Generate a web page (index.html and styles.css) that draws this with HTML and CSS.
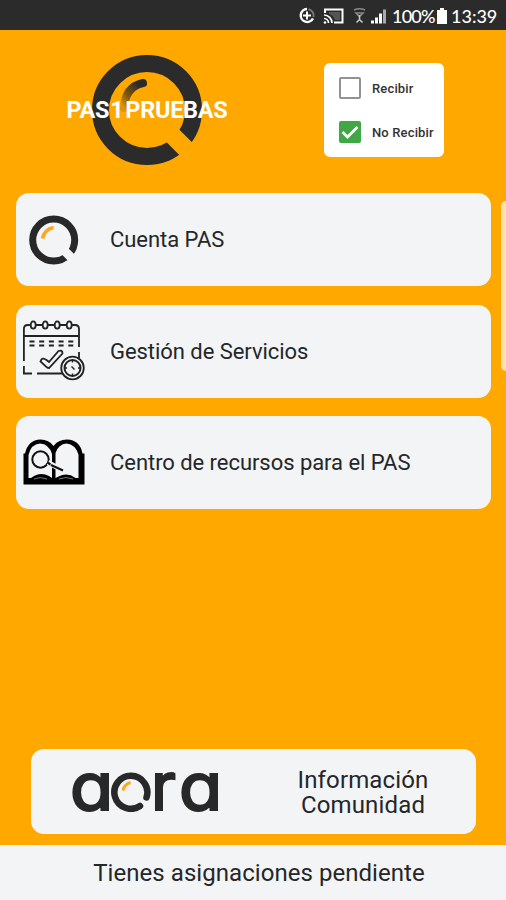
FILE: index.html
```html
<!DOCTYPE html>
<html lang="es">
<head>
    <meta charset="UTF-8">
    <meta name="viewport" content="width=device-width, initial-scale=1.0">
    <title>PAS</title>
    <link rel="stylesheet" href="styles.css">
</head>
<body>

    <div class="status-bar">
        <svg class="status-icons" width="92" height="20" viewBox="0 0 92 20">
            <!-- Data saver -->
            <path d="M9 3A6.500 6.500 0 1 0 15 12.500" fill="none" stroke="#fff" stroke-width="2.400"/>
            <path d="M10.500 3.200A6.500 6.500 0 0 1 15.500 11" fill="none" stroke="#777" stroke-width="2"/>
            <path d="M9 5.500v8M5 9.500h8" stroke="#fff" stroke-width="2"/>
            <!-- Cast -->
            <path d="M27 7V3.500h17.500v13H36" fill="none" stroke="#fff" stroke-width="2"/>
            <path d="M26 9a8 8 0 0 1 8 8M26 12.500a4.500 4.500 0 0 1 4.500 4.500" fill="none" stroke="#fff" stroke-width="1.700"/>
            <path d="M31 6h11v8h-5q-2-5-6-6z" fill="#555"/>
            <circle cx="27" cy="16.500" r="1.300" fill="#fff"/>
            <!-- Wifi -->
            <path d="M56 4q5.500-2.500 11 0M58 7l3.500 3.500L65 7z" fill="none" stroke="#888" stroke-width="1.600"/>
            <path d="M61.500 9v4M58.500 16.500l3-3 3 3" fill="none" stroke="#ccc" stroke-width="1.500"/>
            <!-- Signal -->
            <path d="M73 17.500v-3h3v3zM77 17.500v-6h3v6zM81 17.500v-10h3v10z" fill="#fff"/>
            <path d="M85 17.500V3.500h3v14z" fill="#aaa"/>
        </svg>
        <span class="battery-level">100%</span>
        <svg class="battery" width="10" height="16" viewBox="0 0 10 16">
            <path d="M3 0h4v2h3v14H0V2h3z" fill="#fff"/>
        </svg>
        <span class="clock">13:39</span>
    </div>

    <div class="header">
        <div class="brand">
            <svg width="112" height="112" viewBox="0 0 112 112">
                <defs>
                    <linearGradient id="shine" x1="0" y1="1" x2="0.900" y2="0">
                        <stop offset="0" stop-color="#e09400"/>
                        <stop offset="0.350" stop-color="#80580f"/>
                        <stop offset="0.900" stop-color="#2b2a29"/>
                    </linearGradient>
                </defs>
                <circle cx="56" cy="56" r="46.500" fill="none" stroke="#2b2b2b" stroke-width="17"/>
                <path d="M76 76l34 34" stroke="#ffa800" stroke-width="18"/>
                <path d="M33 54Q34 33 52 29" fill="none" stroke="url(#shine)" stroke-width="8" stroke-linecap="round"/>
            </svg>
            <span class="brand-name">PAS<span class="brand-digit">1</span>PRUEBAS</span>
        </div>
        <div class="options">
            <label class="option"><span class="checkbox"></span>Recibir</label>
            <label class="option">
                <span class="checkbox checked">
                    <svg width="22" height="22" viewBox="0 0 22 22"><path d="M3.500 11l5 5L18.500 6" fill="none" stroke="#fff" stroke-width="2.700"/></svg>
                </span>No Recibir
            </label>
        </div>
    </div>

    <div class="menu">
        <div class="card">
            <svg class="card-icon" width="64" height="64" viewBox="0 0 64 64">
                <circle cx="30.700" cy="32" r="21" fill="none" stroke="#282828" stroke-width="7"/>
                <path d="M39 40.300l17 17" stroke="#f2f4f6" stroke-width="9"/>
                <path d="M19.500 30.500Q21.500 21.500 30.500 19.500" fill="none" stroke="#ffa61a" stroke-width="3.600"/>
            </svg>
            <span class="card-text">Cuenta PAS</span>
        </div>
        <div class="card">
            <svg class="card-icon" width="64" height="64" viewBox="0 0 64 64" fill="none" stroke="#222" stroke-width="1.800">
                <path d="M.9 42V10q0-4 4-4h2M13 6h6M25 6h6M37 6h6M49 6h3q4 0 4 4v18M.9 17H56M56 33v6M.9 47v7.500H9M14 54.500h25"/>
                <ellipse cx="10.200" cy="6" rx="2.500" ry="3.700"/>
                <ellipse cx="22.200" cy="6" rx="2.500" ry="3.700"/>
                <ellipse cx="34.200" cy="6" rx="2.500" ry="3.700"/>
                <ellipse cx="46.200" cy="6" rx="2.500" ry="3.700"/>
                <path d="M6.500 22.500h44M6.500 26.500h44" stroke-dasharray="5 4.700"/>
                <path d="M17.500 42.500q1.500-5 6-1.500l2.500 2L35.500 32q4-1.500 4 2.500L26 49q-2 0-3-1.500z"/>
                <circle cx="49.500" cy="49" r="11.300"/>
                <circle cx="49.500" cy="49" r="8" stroke-width="2"/>
                <path d="M49.500 40.500v3M49.500 54.500v3M41 49h3M55 49h3M48.500 47.500l3 3" stroke-width="1.400"/>
            </svg>
            <span class="card-text">Gestión de Servicios</span>
        </div>
        <div class="card">
            <svg class="card-icon" width="64" height="64" viewBox="0 0 64 64">
                <path d="M.5 22.500H2Q5 9 17.500 8.500 26 8.500 30.500 15 35 8.500 44 8.500 57 9 59.500 22.500H61.500v31H.5z" fill="#000"/>
                <path d="M5.500 47V24Q8 13 17 12.500 26 13 29 23v24l-3-2q-9-5-18 2z" fill="#f2f4f6"/>
                <path d="M32.500 47V22q3-9 11-9.500 9 1 12 11V47h-3q-8-6-17-1.500z" fill="#f2f4f6"/>
                <path d="M11 48q6-3 13 0M36 48q7-3 14 0" fill="none" stroke="#777" stroke-width="1"/>
                <circle cx="17.500" cy="28.500" r="8.200" fill="#f2f4f6" stroke="#111" stroke-width="2"/>
                <path d="M25 31.500l15 8" stroke="#f2f4f6" stroke-width="5"/>
                <path d="M24.500 31.500l3 2M28 34l12 5.500" stroke="#111" stroke-width="2.200"/>
            </svg>
            <span class="card-text">Centro de recursos para el PAS</span>
        </div>
    </div>

    <div class="info-card">
        <div class="logo">
            <span class="logo-letter logo-a">a</span>
            <svg class="logo-ring" width="40" height="40" viewBox="0 0 40 40">
                <path d="M29 34A16.500 16.500 0 1 1 35.500 25.500" fill="none" stroke="#282828" stroke-width="6.500" stroke-linecap="round"/>
                <path d="M12 18.500Q13.500 12 19.500 10.500" fill="none" stroke="#ffa61a" stroke-width="3"/>
            </svg>
            <span class="logo-letter logo-r">r</span>
            <span class="logo-letter logo-a">a</span>
        </div>
        <div class="info-text">
            <span>Información</span>
            <span>Comunidad</span>
        </div>
    </div>

    <div class="footer">Tienes asignaciones pendiente</div>

    <div class="edge-handle"></div>

</body>
</html>
```
FILE: styles.css
```css
body {
    display: flex;
    flex-direction: column;
    height: 900px;
    margin: 0;
    overflow: hidden;
    background-color: #ffa800;
    color: #252628;
    font-family: Roboto, sans-serif;
}

.status-bar {
    display: flex;
    justify-content: flex-end;
    align-items: center;
    height: 30px;
    padding: 1px 9px 0 0;
    box-sizing: border-box;
    background-color: #2b2b2b;
    color: #fff;
    font-family: Lato, sans-serif;
    font-size: 18px;
    font-weight: 500;
}

.status-icons {
    margin-right: 2px;
}

.battery-level {
    width: 42px;
    letter-spacing: -0.8px;
}

.battery {
    margin: 0 4px 0 3px;
}

.clock {
    width: 46px;
}

.header {
    display: flex;
    justify-content: space-between;
    height: 163px;
    padding: 24px 62px 0 66px;
    box-sizing: border-box;
}

.brand {
    display: grid;
    width: 162px;
    height: 112px;
    place-items: center;
}

.brand > * {
    grid-area: 1 / 1;
}

.brand-name {
    color: #fff;
    font-size: 23.5px;
    font-weight: 700;
    white-space: nowrap;
    letter-spacing: -0.3px;
    z-index: 1;
}

.brand-digit {
    margin: 0 2px 0 1px;
}

.options {
    display: flex;
    flex-direction: column;
    gap: 22px;
    width: 120px;
    height: 94px;
    margin-top: 9px;
    padding: 14px 0 0 15px;
    box-sizing: border-box;
    border-radius: 6px;
    background-color: #fff;
}

.option {
    display: flex;
    align-items: center;
    gap: 11px;
    height: 22px;
    color: #333;
    font-size: 13px;
    font-weight: 500;
    letter-spacing: 0.15px;
    white-space: nowrap;
}

.checkbox {
    width: 22px;
    height: 22px;
    box-sizing: border-box;
    border: 2px solid #929292;
    border-radius: 2px;
}

.checkbox.checked {
    border: none;
    background-color: #3fa845;
}

.menu {
    display: flex;
    flex-direction: column;
    gap: 18.5px;
    padding: 0 15px 0 16px;
}

.card {
    display: flex;
    align-items: center;
    height: 93px;
    border-radius: 13px;
    background-color: #f2f4f6;
}

.card-icon {
    margin: 0 23px 0 7px;
}

.card-text {
    font-size: 22px;
    letter-spacing: -0.05px;
    white-space: nowrap;
}

.info-card {
    display: flex;
    align-items: center;
    height: 85px;
    margin: auto 30px 11px 31px;
    border-radius: 13px;
    background-color: #f2f4f6;
}

.logo {
    display: flex;
    align-items: center;
    width: 154px;
    margin-left: 39px;
    color: #282828;
    font-family: Inter, sans-serif;
    font-feature-settings: "cv11";
    font-size: 66px;
    font-weight: 400;
    line-height: 72px;
}

.logo-letter {
    flex-shrink: 0;
    padding-bottom: 12px;
    -webkit-text-stroke: 2.2px #282828;
}

.logo-a {
    width: 41px;
    transform: scaleX(1.07);
    transform-origin: left;
}

.logo-r {
    width: 28px;
}

.logo-ring {
    flex-shrink: 0;
}

.info-text {
    display: flex;
    flex-direction: column;
    width: 164px;
    margin-left: 57px;
    padding-top: 2px;
    text-align: center;
    font-size: 24px;
    line-height: 25px;
    letter-spacing: 0.15px;
}

.footer {
    display: flex;
    justify-content: center;
    align-items: center;
    height: 55px;
    padding: 1px 0 0 12px;
    box-sizing: border-box;
    background-color: #f2f4f6;
    font-size: 24px;
    letter-spacing: 0.05px;
}

.edge-handle {
    position: absolute;
    top: 201px;
    right: 0;
    width: 5px;
    height: 170px;
    border-radius: 5px 0 0 5px;
    background-color: #ffe0a8;
}
```
